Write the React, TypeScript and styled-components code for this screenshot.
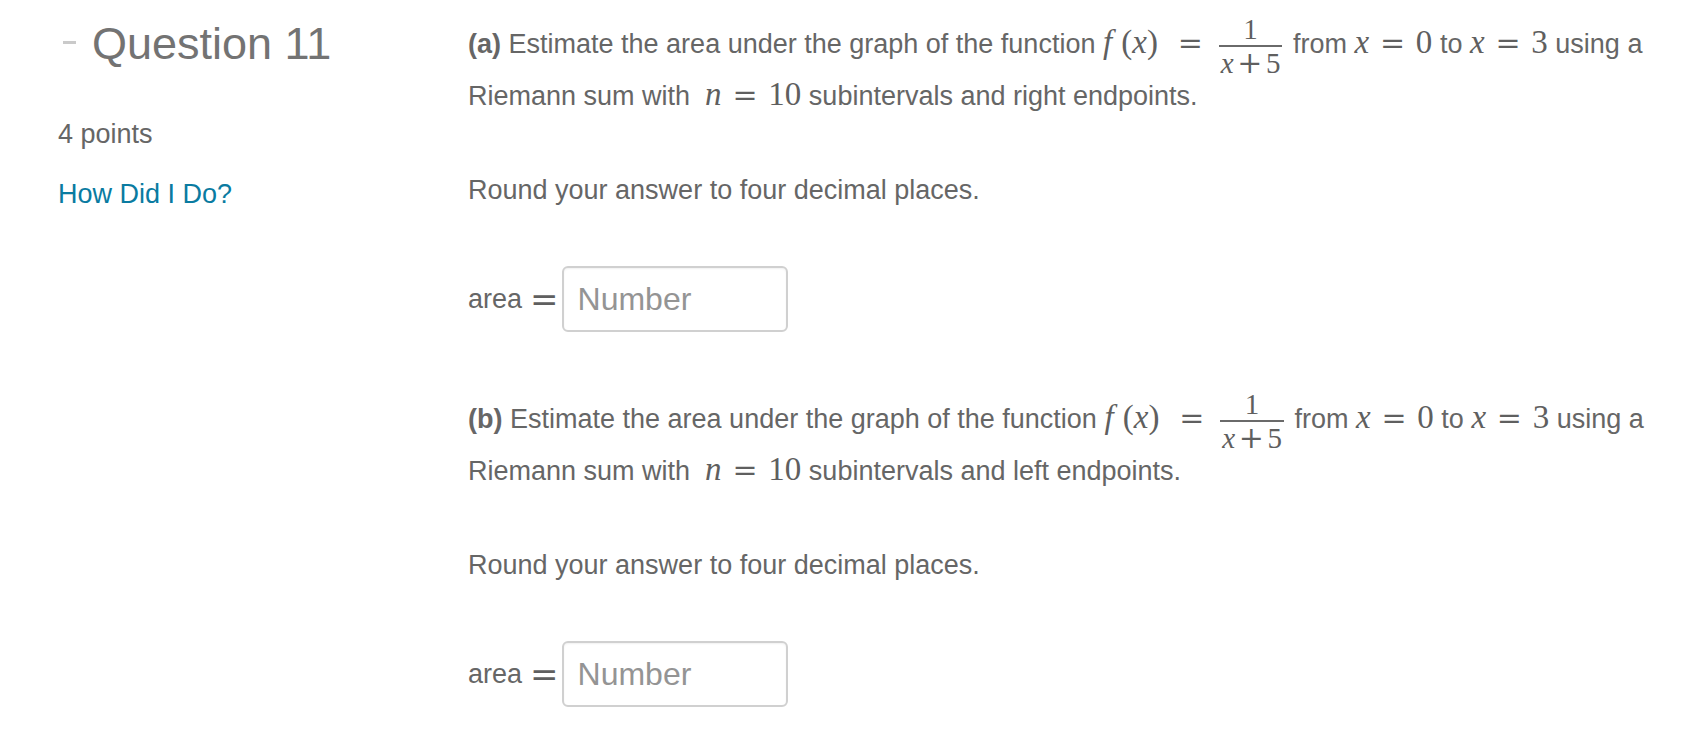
import React from "react";
import styled, { createGlobalStyle } from "styled-components";

const GlobalStyle = createGlobalStyle`
  html, body {
    margin: 0;
    padding: 0;
    background: #ffffff;
  }
  body {
    font-family: "Liberation Sans", Arial, sans-serif;
    color: #666666;
  }
`;

const Page = styled.div`
  display: flex;
  align-items: flex-start;
  padding-left: 58px;
  font-family: "Liberation Sans", Arial, sans-serif;
  color: #666666;
`;

const Sidebar = styled.aside`
  flex: none;
  width: 410px;
  display: flex;
  flex-direction: column;
`;

const Title = styled.h2`
  margin: 19px 0 0;
  display: flex;
  align-items: center;
  height: 50px;
  font-size: 45px;
  line-height: 50px;
  font-weight: 400;
  color: #737373;
`;

const Toggle = styled.span`
  flex: none;
  width: 13px;
  height: 3px;
  margin: 0 16px 4px 5px;
  background: #cacaca;
`;

const Points = styled.div`
  margin-top: 47px;
  font-size: 27px;
  line-height: 36px;
`;

const HelpLink = styled.a`
  margin-top: 24px;
  font-size: 27px;
  line-height: 36px;
  color: #0a7ba1;
  text-decoration: none;
  align-self: flex-start;
  cursor: pointer;
`;

const Main = styled.main`
  flex: 1;
  display: flex;
  flex-direction: column;
  gap: 61px;
  padding-top: 18px;
`;

const Part = styled.section`
  display: flex;
  flex-direction: column;
`;

const Para = styled.p<{ $gap?: number }>`
  margin: ${(p) => p.$gap ?? 0}px 0 0;
  font-size: 27px;
  line-height: 52px;
  white-space: nowrap;
`;

const Label = styled.b`
  font-weight: 700;
`;

const MathText = styled.span`
  font-family: "Liberation Serif", "Times New Roman", serif;
  font-size: 33px;
  line-height: 1;
  color: #5f5f5f;
`;

const Var = styled.i`
  font-style: italic;
`;

const Paren = styled.span`
  margin-left: 0.28em;
`;

const Op = styled.span<{ $space?: number; $lead?: number }>`
  font-family: "DejaVu Serif", "Liberation Serif", serif;
  font-size: 30px;
  line-height: 1;
  margin: 0 ${(p) => p.$space ?? 0.36}em 0
    ${(p) => (p.$lead ?? 0) + (p.$space ?? 0.36) * 30}px;
`;

const Frac = styled.span`
  display: inline-flex;
  flex-direction: column;
  align-items: stretch;
  vertical-align: middle;
  margin: -12px 3px -12px 5px;
  font-family: "Liberation Serif", "Times New Roman", serif;
  font-size: 29px;
  line-height: 32px;
  color: #5f5f5f;
`;

const Num = styled.span`
  text-align: center;
  padding: 0 2px;
  border-bottom: 2px solid #6a6a6a;
`;

const Den = styled.span`
  text-align: center;
  padding: 0 2px;
`;

const AreaRow = styled.div`
  margin-top: 50px;
  display: flex;
  align-items: center;
  height: 66px;
  font-size: 27px;
  line-height: 52px;
`;

const AreaEq = styled.span`
  font-family: "DejaVu Serif", "Liberation Serif", serif;
  font-size: 34px;
  line-height: 1;
  color: #5f5f5f;
  margin: 0 3px 0 8px;
`;

const NumberInput = styled.input`
  box-sizing: border-box;
  width: 226px;
  height: 66px;
  padding: 0 14px;
  border: 2px solid #d0d0d0;
  border-radius: 6px;
  box-shadow: inset 0 1px 2px rgba(0, 0, 0, 0.06);
  font-family: "Liberation Sans", Arial, sans-serif;
  font-size: 32px;
  color: #555;
  background: #fff;
  outline: none;

  &::placeholder {
    color: #949494;
  }
`;

type PartProps = { letter: string; side: string };

const Question = ({ letter, side }: PartProps) => (
  <Part>
    <Para>
      <Label>({letter})</Label> Estimate the area under the graph of the function{" "}
      <MathText>
        <Var>f</Var>
        <Paren>(</Paren>
        <Var>x</Var>)
        <Op $lead={9}>=</Op>
      </MathText>
      <Frac>
        <Num>1</Num>
        <Den>
          <Var>x</Var>
          <Op $space={0.12}>+</Op>5
        </Den>
      </Frac>{" "}
      from{" "}
      <MathText>
        <Var>x</Var>
        <Op>=</Op>0
      </MathText>{" "}
      to{" "}
      <MathText>
        <Var>x</Var>
        <Op>=</Op>3
      </MathText>{" "}
      using a
      <br />
      Riemann sum with&nbsp;{" "}
      <MathText>
        <Var>n</Var>
        <Op>=</Op>10
      </MathText>{" "}
      subintervals and {side} endpoints.
    </Para>
    <Para $gap={42}>Round your answer to four decimal places.</Para>
    <AreaRow>
      area
      <AreaEq>=</AreaEq>
      <NumberInput type="text" placeholder="Number" aria-label="area" />
    </AreaRow>
  </Part>
);

export default function App() {
  return (
    <>
      <GlobalStyle />
      <Page>
        <Sidebar>
          <Title>
            <Toggle />
            Question 11
          </Title>
          <Points>4 points</Points>
          <HelpLink>How Did I Do?</HelpLink>
        </Sidebar>
        <Main>
          <Question letter="a" side="right" />
          <Question letter="b" side="left" />
        </Main>
      </Page>
    </>
  );
}
